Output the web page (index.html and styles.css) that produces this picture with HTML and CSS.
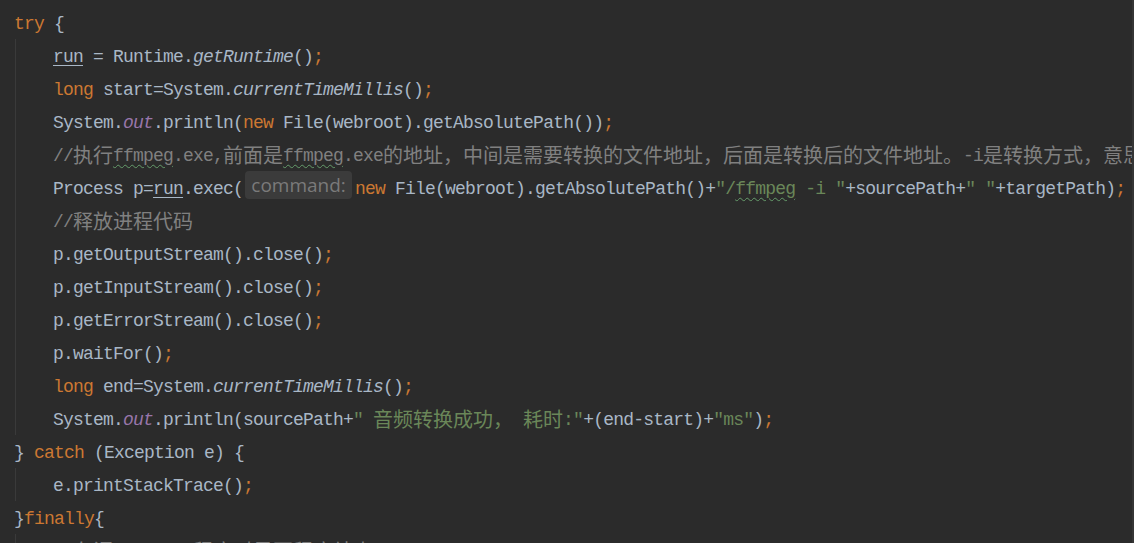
FILE: index.html
```html
<!DOCTYPE html>
<html lang="zh">
<head>
<meta charset="utf-8">
<title>Editor</title>
<link rel="stylesheet" href="styles.css">
</head>
<body>
<div class="editor">
  <div class="code">
    <div class="line top"><span class="k">try</span> {</div>
    <div class="block">
      <div class="line"><span class="u">run</span> = Runtime.<span class="i">getRuntime</span>()<span class="k">;</span></div>
      <div class="line"><span class="k">long</span> start=System.<span class="i">currentTimeMillis</span>()<span class="k">;</span></div>
      <div class="line">System.<span class="f">out</span>.println(<span class="k">new</span> File(webroot).getAbsolutePath())<span class="k">;</span></div>
      <div class="line"><span class="c">//<span class="z">执行</span><span class="t">ffmpeg</span>.exe,<span class="z">前面是</span><span class="t">ffmpeg</span>.exe<span class="z">的地址，中间是需要转换的文件地址，后面是转换后的文件地址。</span>-i<span class="z">是转换方式，意思是可以编码方式</span></span></div>
      <div class="line">Process p=<span class="u">run</span>.exec(<span class="hint">command:</span><span class="k">new</span> File(webroot).getAbsolutePath()+<span class="s">"/<span class="t">ffmpeg</span> -i "</span>+sourcePath+<span class="s">" "</span>+targetPath)<span class="k">;</span></div>
      <div class="line"><span class="c">//<span class="z">释放进程代码</span></span></div>
      <div class="line">p.getOutputStream().close()<span class="k">;</span></div>
      <div class="line">p.getInputStream().close()<span class="k">;</span></div>
      <div class="line">p.getErrorStream().close()<span class="k">;</span></div>
      <div class="line">p.waitFor()<span class="k">;</span></div>
      <div class="line"><span class="k">long</span> end=System.<span class="i">currentTimeMillis</span>()<span class="k">;</span></div>
      <div class="line">System.<span class="f">out</span>.println(sourcePath+<span class="s">" <span class="z">音频转换成功，</span> <span class="z">耗时</span>:"</span>+(end-start)+<span class="s">"ms"</span>)<span class="k">;</span></div>
    </div>
    <div class="line top">} <span class="k">catch</span> (Exception e) {</div>
    <div class="block">
      <div class="line">e.printStackTrace()<span class="k">;</span></div>
    </div>
    <div class="line top">}<span class="k">finally</span>{</div>
    <div class="block">
      <div class="line"><span class="c">//<span class="z">在调用</span><span class="t">ffmpeg</span><span class="z">程序时是否程序结束了</span></span></div>
    </div>
  </div>
  <div class="edge"></div>
</div>
</body>
</html>
```

FILE: styles.css
```css
html, body {
  margin: 0;
  padding: 0;
  background: #2b2b2b;
  height: 543px;
  overflow: hidden;
}

.editor {
  display: flex;
  height: 543px;
}

.code {
  flex: 1;
  min-width: 0;
  overflow: hidden;
  padding-top: 5.5px;
  font-family: "Liberation Mono", monospace;
  font-size: 18px;
  letter-spacing: -0.8px;
  color: #a9b7c6;
}

.edge {
  width: 2px;
  background: #353535;
}

.line {
  height: 33px;
  line-height: 37px;
  white-space: pre;
}

.line.top {
  padding-left: 14px;
}

.block {
  margin-left: 15px;
  border-left: 1px solid #3a3a3a;
  padding-left: 37px;
}

.k { color: #cc7832; }
.s { color: #6a8759; }
.c { color: #808080; }
.i { font-style: italic; }
.f { color: #9876aa; font-style: italic; }
.u {
  text-decoration: underline;
  text-underline-offset: 3px;
}
.t {
  text-decoration: underline wavy #659c6b;
  text-decoration-thickness: 1px;
  text-underline-offset: 3px;
}

.z {
  font-family: "Noto Sans CJK SC", sans-serif;
  font-size: 20px;
  line-height: 20px;
  letter-spacing: 0;
  vertical-align: -2px;
}

.hint {
  display: inline-block;
  vertical-align: top;
  width: 107px;
  height: 28px;
  line-height: 28px;
  margin: 0 3px 0 2px;
  background: #3b3b3b;
  border-radius: 4px;
  color: #7a7a7a;
  font-family: "Open Sans", "Noto Sans", sans-serif;
  font-size: 19px;
  letter-spacing: 0;
  text-align: center;
}
```
